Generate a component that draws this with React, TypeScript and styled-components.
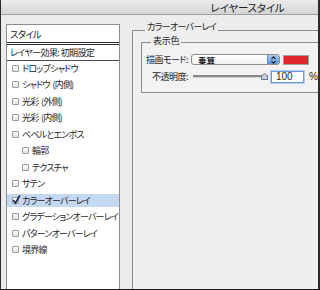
import React from 'react';
import styled, { createGlobalStyle } from 'styled-components';

const GlobalStyle = createGlobalStyle`
	html, body {
		margin: 0;
		padding: 0;
		background: #ececec;
	}
	body {
		font-family: "Noto Sans CJK JP", "Noto Sans", sans-serif;
		color: #1e1e1e;
	}
`;

const Window = styled.div`
	width: 320px;
	height: 290px;
	box-sizing: border-box;
	overflow: hidden;
	display: flex;
	flex-direction: column;
	background: #ececec;
	border-left: 1px solid #2b2b2b;
	border-right: 2px solid #2b2b2b;
	border-bottom: 1px solid #1c1c1c;
`;

const TitleBar = styled.div`
	height: 14px;
	flex-shrink: 0;
	display: flex;
	align-items: center;
	justify-content: center;
	padding-left: 176px;
	background: linear-gradient(#ececec, #d4d4d4);
	border-bottom: 1px solid #9f9f9f;
	font-size: 10.5px;
	font-feature-settings: 'palt';
	letter-spacing: -0.2px;
	color: #222;
`;

const Body = styled.div`
	flex: 1;
	min-height: 0;
	display: flex;
	align-items: flex-start;
	padding: 8px 0 0 5px;
`;

const StyleList = styled.div`
	width: 114px;
	height: 280px;
	flex-shrink: 0;
	box-sizing: border-box;
	margin: 1px 12px 0 0;
	background: #fff;
	border: 1px solid #8d8d8d;
	border-bottom: none;
	font-size: 9px;
	font-feature-settings: 'palt';
	letter-spacing: -0.8px;
`;

const ListHeader = styled.div`
	height: 17px;
	display: flex;
	align-items: center;
	padding-left: 3px;
	border-bottom: 3px double #2e2e2e;
	font-size: 9.5px;
`;

const PresetRow = styled.div`
	height: 15px;
	display: flex;
	align-items: center;
	padding-left: 3px;
	border-bottom: 1px solid #4a4a4a;
	letter-spacing: -0.6px;
`;

const Items = styled.div`
	margin-top: -1px;
	word-spacing: 1.5px;
`;

const Item = styled.div<{ $indent?: boolean; $selected?: boolean }>`
	height: 16.5px;
	box-sizing: border-box;
	display: flex;
	align-items: center;
	gap: 3px;
	padding-left: ${p => (p.$indent ? '15px' : '5px')};
	background: ${p =>
		p.$selected
			? 'linear-gradient(transparent 2px, #c5d8f2 2px, #c5d8f2 calc(100% - 2px), transparent calc(100% - 2px))'
			: 'transparent'};
	white-space: pre;
`;

const Box = styled.span`
	position: relative;
	width: 7px;
	height: 7px;
	flex-shrink: 0;
	box-sizing: border-box;
	border: 1px solid #9a9a9a;
	border-radius: 1px;
	background: linear-gradient(#fdfdfd, #e4e4e4);
	svg {
		position: absolute;
		left: -1px;
		top: -3px;
	}
`;

const Group = styled.fieldset`
	flex: 1;
	align-self: stretch;
	min-width: 0;
	margin: 0;
	padding: 0 0 0 8px;
	border: 1px solid #8c8c8c;
	border-right: none;
	border-bottom: none;
	background: #efefef;
	font-size: 9px;
	font-feature-settings: 'palt';
`;

const Legend = styled.legend`
	margin-left: 4px;
	padding: 0 2px 6px;
	line-height: 8px;
	font-size: 9px;
	letter-spacing: -0.7px;
`;

const InnerGroup = styled.fieldset`
	margin: 0 -4px 0 0;
	padding: 6px 0 9px 4px;
	border: 1px solid #8c8c8c;
	border-right: none;
	background: #f2f2f2;
`;

const InnerLegend = styled(Legend)`
	margin-left: 5px;
	padding-bottom: 2px;
	letter-spacing: -0.2px;
`;

const FormGrid = styled.div`
	display: grid;
	grid-template-columns: 42px auto;
	column-gap: 3px;
	row-gap: 4px;
	align-items: center;
	font-size: 9px;
`;

const Label = styled.span`
	text-align: right;
	white-space: nowrap;
	letter-spacing: -0.5px;
`;

const Controls = styled.div`
	display: flex;
	align-items: center;
	gap: 3px;
`;

const Select = styled.div`
	width: 89px;
	height: 11px;
	box-sizing: border-box;
	display: flex;
	align-items: center;
	justify-content: space-between;
	padding-left: 6px;
	background: linear-gradient(#ffffff, #f1f1f1);
	border: 1px solid #8f8f8f;
	border-radius: 3px;
	overflow: hidden;
	font-size: 8.5px;
	font-weight: bold;
`;

const Stepper = styled.span`
	width: 11px;
	height: 100%;
	display: flex;
	align-items: center;
	justify-content: center;
	background: linear-gradient(#a8c8ef, #5d95dc);
	border-left: 1px solid #6a8dbd;
`;

const Swatch = styled.span<{ $color: string }>`
	width: 26px;
	height: 10px;
	box-sizing: border-box;
	background: ${p => p.$color};
	border: 1px solid #a0a0a0;
`;

const Slider = styled.div`
	position: relative;
	width: 77px;
	height: 12px;
	display: flex;
	align-items: center;
	padding-left: 2px;
	box-sizing: border-box;
`;

const Track = styled.span`
	width: 100%;
	height: 2px;
	background: #8a8a8a;
	border-bottom: 1px solid #d0d0d0;
`;

const Thumb = styled.svg`
	position: absolute;
	right: 0;
	top: 2px;
`;

const NumberInput = styled.div`
	width: 33px;
	height: 12px;
	box-sizing: border-box;
	display: flex;
	align-items: center;
	padding-left: 4px;
	background: #fff;
	border: 1px solid #6f9ad6;
	box-shadow: 0 0 0 1px #b4cdee;
	font-family: 'Liberation Sans', Arial, sans-serif;
	font-size: 10px;
`;

const Unit = styled.span`
	margin-left: 2px;
	font-family: 'Liberation Sans', Arial, sans-serif;
	font-size: 10px;
`;

type Effect = { label: string; indent?: boolean; checked?: boolean; selected?: boolean };

const effects: Effect[] = [
	{ label: 'ドロップシャドウ' },
	{ label: 'シャドウ (内側)' },
	{ label: '光彩 (外側)' },
	{ label: '光彩 (内側)' },
	{ label: 'ベベルとエンボス' },
	{ label: '輪郭', indent: true },
	{ label: 'テクスチャ', indent: true },
	{ label: 'サテン' },
	{ label: 'カラーオーバーレイ', checked: true, selected: true },
	{ label: 'グラデーションオーバーレイ' },
	{ label: 'パターンオーバーレイ' },
	{ label: '境界線' },
];

const CheckMark = () => (
	<svg width="9" height="10" viewBox="0 0 9 10">
		<path d="M1.5 5.5 L3.5 8 L7.5 1" fill="none" stroke="#1b2350" strokeWidth="1.6" strokeLinecap="round" />
	</svg>
);

export default function App() {
	return (
		<Window>
			<GlobalStyle />
			<TitleBar>レイヤースタイル</TitleBar>
			<Body>
				<StyleList>
					<ListHeader>スタイル</ListHeader>
					<PresetRow>レイヤー効果: 初期設定</PresetRow>
					<Items>
						{effects.map(e => (
							<Item key={e.label} $indent={e.indent} $selected={e.selected}>
								<Box>{e.checked && <CheckMark />}</Box>
								{e.label}
							</Item>
						))}
					</Items>
				</StyleList>
				<Group>
					<Legend>カラーオーバーレイ</Legend>
					<InnerGroup>
						<InnerLegend>表示色</InnerLegend>
						<FormGrid>
							<Label>描画モード:</Label>
							<Controls>
								<Select>
									乗算
									<Stepper>
										<svg width="5" height="8" viewBox="0 0 5 8">
											<path d="M0.5 3 L2.5 0.8 L4.5 3 M0.5 5 L2.5 7.2 L4.5 5" fill="none" stroke="#1a1a1a" strokeWidth="1.1" />
										</svg>
									</Stepper>
								</Select>
								<Swatch $color="#e0272e" />
							</Controls>
							<Label>不透明度:</Label>
							<Controls>
								<Slider>
									<Track />
									<Thumb width="7" height="7" viewBox="0 0 7 7">
										<path d="M0.5 3 L3.5 0.5 L6.5 3 V6.5 H0.5 Z" fill="#c2cfdf" stroke="#6a7a92" strokeWidth="1" />
									</Thumb>
								</Slider>
								<NumberInput>100</NumberInput>
								<Unit>%</Unit>
							</Controls>
						</FormGrid>
					</InnerGroup>
				</Group>
			</Body>
		</Window>
	);
}
